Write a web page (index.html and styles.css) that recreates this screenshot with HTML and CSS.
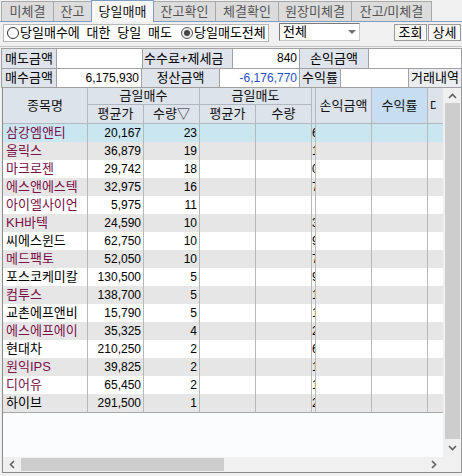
FILE: index.html
```html
<!DOCTYPE html>
<html lang="ko">
<head>
<meta charset="utf-8">
<link rel="stylesheet" href="styles.css">
</head>
<body>
<div class="win">
  <div class="tabs">
    <div class="tab t1">미체결</div>
    <div class="tab t2">잔고</div>
    <div class="tab t3 active">당일매매</div>
    <div class="tab t4">잔고확인</div>
    <div class="tab t5">체결확인</div>
    <div class="tab t6">원장미체결</div>
    <div class="tab t7">잔고/미체결</div>
  </div>
  <div class="toolbar">
    <div class="radios">
      <span class="radio"><span class="circle"></span><span class="rlabel">당일매수에 대한 당일 매도</span></span>
      <span class="radio on"><span class="circle"></span><span class="rlabel">당일매도전체</span></span>
    </div>
    <div class="select"><span class="sel-text">전체</span><span class="sel-btn"><span class="tri"></span></span></div>
    <div class="spacer"></div>
    <div class="btn">조회</div>
    <div class="btn">상세</div>
  </div>
  <div class="sep"></div>
  <div class="info">
    <div class="irow">
      <div class="c lab w55">매도금액</div>
      <div class="c val w86"></div>
      <div class="c lab w90 left">수수료+제세금</div>
      <div class="c val w67">840</div>
      <div class="c lab w69">손익금액</div>
      <div class="c val w93"></div>
    </div>
    <div class="irow">
      <div class="c lab w55">매수금액</div>
      <div class="c val w85">6,175,930</div>
      <div class="c lab w78">정산금액</div>
      <div class="c val w80 blue">-6,176,770</div>
      <div class="c lab w41">수익률</div>
      <div class="c val w68"></div>
      <div class="c bt w53">거래내역</div>
    </div>
  </div>
  <div class="gridbox">
    <div class="gridmain">
      <div class="tablewrap">
        <table class="grid">
          <colgroup>
            <col class="cw85"><col class="cw56"><col class="cw56"><col class="cw56"><col class="cw56"><col class="cw4"><col class="cw56"><col class="cw56"><col class="cw56">
          </colgroup>
          <thead>
            <tr class="h1">
              <th rowspan="2">종목명</th>
              <th colspan="2">금일매수</th>
              <th colspan="2">금일매도</th>
              <th rowspan="2" class="clip"></th>
              <th rowspan="2">손익금액</th>
              <th rowspan="2" class="hl">수익률</th>
              <th rowspan="2" class="lastc"><span class="cut">대</span></th>
            </tr>
            <tr class="h2">
              <th>평균가</th>
              <th>수량▽</th>
              <th>평균가</th>
              <th>수량</th>
            </tr>
          </thead>
          <tbody>
            <tr class="sel"><td class="nm m">삼강엠앤티</td><td>20,167</td><td>23</td><td></td><td></td><td class="clip">6</td><td></td><td></td><td></td></tr>
            <tr class="alt"><td class="nm m">올릭스</td><td>36,879</td><td>19</td><td></td><td></td><td class="clip">1</td><td></td><td></td><td></td></tr>
            <tr><td class="nm m">마크로젠</td><td>29,742</td><td>18</td><td></td><td></td><td class="clip">0</td><td></td><td></td><td></td></tr>
            <tr class="alt"><td class="nm m">에스앤에스텍</td><td>32,975</td><td>16</td><td></td><td></td><td class="clip">7</td><td></td><td></td><td></td></tr>
            <tr><td class="nm m">아이엘사이언</td><td>5,975</td><td>11</td><td></td><td></td><td class="clip"></td><td></td><td></td><td></td></tr>
            <tr class="alt"><td class="nm m">KH바텍</td><td>24,590</td><td>10</td><td></td><td></td><td class="clip">3</td><td></td><td></td><td></td></tr>
            <tr><td class="nm">씨에스윈드</td><td>62,750</td><td>10</td><td></td><td></td><td class="clip">9</td><td></td><td></td><td></td></tr>
            <tr class="alt"><td class="nm m">메드팩토</td><td>52,050</td><td>10</td><td></td><td></td><td class="clip">7</td><td></td><td></td><td></td></tr>
            <tr><td class="nm">포스코케미칼</td><td>130,500</td><td>5</td><td></td><td></td><td class="clip">9</td><td></td><td></td><td></td></tr>
            <tr class="alt"><td class="nm m">컴투스</td><td>138,700</td><td>5</td><td></td><td></td><td class="clip">1</td><td></td><td></td><td></td></tr>
            <tr><td class="nm">교촌에프앤비</td><td>15,790</td><td>5</td><td></td><td></td><td class="clip">1</td><td></td><td></td><td></td></tr>
            <tr class="alt"><td class="nm m">에스에프에이</td><td>35,325</td><td>4</td><td></td><td></td><td class="clip">2</td><td></td><td></td><td></td></tr>
            <tr><td class="nm">현대차</td><td>210,250</td><td>2</td><td></td><td></td><td class="clip">6</td><td></td><td></td><td></td></tr>
            <tr class="alt"><td class="nm m">원익IPS</td><td>39,825</td><td>2</td><td></td><td></td><td class="clip">1</td><td></td><td></td><td></td></tr>
            <tr><td class="nm m">디어유</td><td>65,450</td><td>2</td><td></td><td></td><td class="clip">1</td><td></td><td></td><td></td></tr>
            <tr class="alt last"><td class="nm">하이브</td><td>291,500</td><td>1</td><td></td><td></td><td class="clip">2</td><td></td><td></td><td></td></tr>
          </tbody>
        </table>
      </div>
      <div class="vscroll">
        <div class="arrow up"><svg width="9" height="6" viewBox="0 0 9 6"><path d="M1 5 L4.5 1.5 L8 5" fill="none" stroke="#606060" stroke-width="1.6"/></svg></div>
        <div class="vthumb"></div>
        <div class="arrow down"><svg width="9" height="6" viewBox="0 0 9 6"><path d="M1 1 L4.5 4.5 L8 1" fill="none" stroke="#606060" stroke-width="1.6"/></svg></div>
      </div>
    </div>
    <div class="hrow">
      <div class="hscroll">
        <div class="harrow"><svg width="6" height="9" viewBox="0 0 6 9"><path d="M5 1 L1.5 4.5 L5 8" fill="none" stroke="#606060" stroke-width="1.6"/></svg></div>
        <div class="hthumb"></div>
        <div class="hfill"></div>
        <div class="harrow"><svg width="6" height="9" viewBox="0 0 6 9"><path d="M1 1 L4.5 4.5 L1 8" fill="none" stroke="#606060" stroke-width="1.6"/></svg></div>
      </div>
      <div class="corner"></div>
    </div>
  </div>
</div>
</body>
</html>
```

FILE: styles.css
```css
* { box-sizing: border-box; }
html, body { margin: 0; padding: 0; }
body {
  background: #f0f0f0;
  font-family: "Liberation Sans", "Noto Sans CJK KR", sans-serif;
  font-size: 12px;
  color: #000;
  width: 462px;
  height: 476px;
  overflow: hidden;
}
.win { width: 462px; }

/* tabs */
.tabs {
  display: flex;
  height: 22px;
  padding-left: 1px;
  border-bottom: 1px solid #7f9cc4;
  align-items: flex-end;
}
.tab {
  height: 20px;
  margin-left: -1px;
  border: 1px solid #a9a9a9;
  border-bottom: none;
  background: #dcdcdc;
  color: #555;
  font-size: 13px;
  line-height: 19px;
  text-align: center;
}
.tab.t1 { width: 53px; margin-left: 0; }
.tab.t2 { width: 39px; }
.tab.t3 { width: 63px; }
.tab.t4 { width: 63px; }
.tab.t5 { width: 64px; }
.tab.t6 { width: 74px; }
.tab.t7 { width: 81px; }
.tab.active {
  height: 22px;
  margin-bottom: -1px;
  background: #f7f7f7;
  border-color: #7f9cc4;
  color: #111;
  line-height: 21px;
  position: relative;
  z-index: 1;
}

/* toolbar */
.toolbar {
  display: flex;
  height: 24px;
  padding-top: 1px;
  padding-left: 3px;
  align-items: flex-start;
}
.radios {
  display: flex;
  align-items: center;
  width: 266px;
  height: 18px;
  margin-top: 1px;
  background: #fff;
  border: 1px solid #b8b8b8;
  padding-left: 3px;
  white-space: nowrap;
}
.radio { display: flex; align-items: center; }
.radio + .radio { margin-left: 9px; }
.circle {
  width: 12px;
  height: 12px;
  border-radius: 50%;
  border: 1px solid #333;
  background: #fff;
  position: relative;
  margin-right: 1px;
  flex: none;
}
.radio.on .circle { border-color: #555; background: #ececec; }
.radio.on .circle::after {
  content: "";
  position: absolute;
  left: 2px; top: 2px;
  width: 6px; height: 6px;
  border-radius: 50%;
  background: #444;
}
.rlabel { font-size: 13px; line-height: 16px; word-spacing: 3.2px; }
.select {
  display: flex;
  width: 81px;
  height: 18px;
  margin-left: 10px;
  background: #fff;
  border: 1px solid #7a7a7a;
  border-right-color: #c8c8c8;
  border-bottom-color: #c8c8c8;
}
.sel-text { flex: 1; padding-left: 3px; font-size: 13px; line-height: 16px; }
.sel-btn {
  width: 14px;
  display: flex;
  align-items: center;
  justify-content: center;
  background: #fff;
}
.tri {
  width: 0; height: 0;
  border-left: 4px solid transparent;
  border-right: 4px solid transparent;
  border-top: 4px solid #707070;
}
.spacer { flex: 1; }
.btn {
  width: 33px;
  height: 17px;
  margin-top: 1px;
  border: 1px solid #9a9a9a;
  background: #f6f6f6;
  font-size: 13px;
  line-height: 15px;
  text-align: center;
}
.btn + .btn { margin-left: 1px; margin-right: 1px; }

.sep { height: 1px; background: #c4c4c4; margin-bottom: 1px; }

/* info table */
.info {
  margin-left: 1px;
  border-left: 1px solid #a0a0a0;
  border-top: 1px solid #a0a0a0;
  width: 461px;
}
.irow { display: flex; }
.irow:first-child .c { height: 20px; line-height: 19px; }
.irow:last-child .c { height: 19px; line-height: 18px; }
.c {
  border-right: 1px solid #a0a0a0;
  border-bottom: 1px solid #a0a0a0;
  font-size: 12px;
  white-space: nowrap;
  overflow: hidden;
}
.lab { background: #dfe4ec; text-align: center; font-size: 13px; }
.lab.left { text-align: left; padding-left: 1px; }
.val { background: #fff; text-align: right; padding-right: 2px; }
.bt { background: #ebedf0; text-align: center; font-size: 13px; }
.blue { color: #1f4fd0; }
.w55 { width: 55px; } .w86 { width: 86px; } .w90 { width: 90px; } .w67 { width: 67px; }
.w69 { width: 69px; } .w93 { width: 93px; } .w85 { width: 85px; } .w78 { width: 78px; }
.w80 { width: 80px; } .w41 { width: 41px; } .w68 { width: 68px; } .w53 { width: 53px; }

/* grid */
.gridbox {
  margin-left: 2px;
  width: 460px;
  height: 385px;
  border-left: 1px solid #8a8a8a;
  border-right: 1px solid #9a9a9a;
  border-bottom: 1px solid #8a8a8a;
  display: flex;
  flex-direction: column;
}
.gridmain { display: flex; height: 369px; }
.tablewrap {
  width: 440px;
  height: 369px;
  overflow: hidden;
  background: #fbfcfe;
}
.grid {
  table-layout: fixed;
  width: 481px;
  border-collapse: separate;
  border-spacing: 0;
}
.cw85 { width: 85px; } .cw56 { width: 56px; } .cw4 { width: 4px; }
.grid th {
  background: #dde3eb;
  font-weight: normal;
  font-size: 13px;
  color: #111;
  border-right: 1px solid #b2b8c0;
  border-bottom: 1px solid #b2b8c0;
  padding: 0;
  white-space: nowrap;
  overflow: hidden;
}
.grid tr.h1 th { height: 17px; line-height: 16px; }
.grid tr.h2 th { height: 19px; line-height: 18px; }
.grid th.hl { background: #c7ddf1; }
.grid th.lastc { text-align: left; padding-left: 2px; }
.cut { display: inline-block; width: 6px; overflow: hidden; vertical-align: top; }
.grid td {
  height: 18px;
  padding: 0 2px 0 0;
  line-height: 18px;
  text-align: right;
  border-right: 1px solid #b8b8b8;
  background: #fff;
  white-space: nowrap;
  overflow: hidden;
  font-size: 12px;
}
.grid tr.alt td { background: #e6e6e6; }
.grid tr.sel td { background: #c9e6f1; }
.grid tr.last td { border-bottom: 1px solid #a8a8a8; }
.grid td.nm { text-align: left; padding: 0 0 0 3px; font-size: 13px; }
.grid td.m { color: #7a1048; }
.grid td.clip, .grid th.clip { padding: 0; text-align: left; overflow: hidden; }

.vscroll {
  width: 18px;
  height: 369px;
  background: #f0f0f0;
  display: flex;
  flex-direction: column;
  align-items: center;
}
.arrow { height: 15px; width: 16px; display: flex; align-items: center; justify-content: center; }
.vthumb { width: 15px; flex: 1; background: #cdcdcd; }
.arrow.down { height: 18px; }

.hrow { display: flex; height: 15px; }
.hscroll {
  width: 440px;
  display: flex;
  align-items: center;
  background: #f0f0f0;
}
.harrow { width: 18px; height: 15px; display: flex; align-items: center; justify-content: center; }
.hthumb { width: 203px; height: 13px; background: #cdcdcd; }
.hfill { flex: 1; }
.corner { width: 18px; background: #f0f0f0; }
```
